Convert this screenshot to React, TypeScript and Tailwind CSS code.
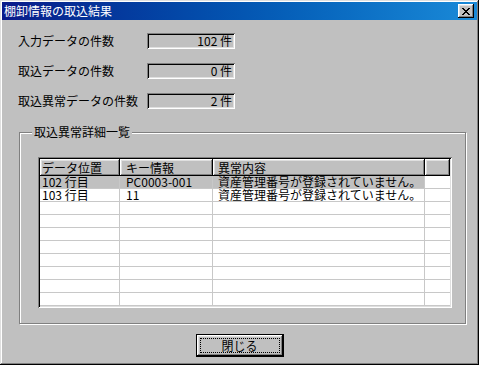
import React from "react";

const font = { fontFamily: '"Noto Sans CJK JP", "Noto Sans", sans-serif' };

const raised =
  "shadow-[inset_-1px_-1px_0_#000,inset_1px_1px_0_#fff,inset_-2px_-2px_0_#808080,inset_2px_2px_0_#dfdfdf]";
const sunken =
  "shadow-[inset_1px_1px_0_#808080,inset_-1px_-1px_0_#fff,inset_2px_2px_0_#000,inset_-2px_-2px_0_#dfdfdf]";

const counts = [
  { label: "入力データの件数", value: "102 件" },
  { label: "取込データの件数", value: "0 件" },
  { label: "取込異常データの件数", value: "2 件" },
];

const columns = [
  { title: "データ位置", w: "w-[80px]", pad: "pl-[2px]" },
  { title: "キー情報", w: "w-[93px]", pad: "pl-[6px]" },
  { title: "異常内容", w: "w-[212px]", pad: "pl-[5px]" },
];

const rows = [
  ["102 行目", "PC0003-001", "資産管理番号が登録されていません。"],
  ["103 行目", "11", "資産管理番号が登録されていません。"],
];

function CloseButton() {
  return (
    <div
      className={`w-[16px] h-[14px] bg-[#c0c0c0] flex items-center justify-center ${raised}`}
    >
      <svg width="8" height="7" viewBox="0 0 8 7" shapeRendering="crispEdges">
        <path
          d="M0 0h2v1h-2zM6 0h2v1h-2zM1 1h2v1h-2zM5 1h2v1h-2zM2 2h4v1h-4zM3 3h2v1h-2zM2 4h4v1h-4zM1 5h2v1h-2zM5 5h2v1h-2zM0 6h2v1h-2zM6 6h2v1h-2z"
          fill="#000"
        />
      </svg>
    </div>
  );
}

export default function App() {
  const blank = Array.from({ length: 10 }, (_, i) => rows[i] ?? ["", "", ""]);

  return (
    <div
      className="w-[479px] h-[365px] bg-[#c0c0c0] p-[2px] text-[12px] text-black shadow-[inset_-1px_-1px_0_#000,inset_1px_1px_0_#dfdfdf,inset_-2px_-2px_0_#808080,inset_2px_2px_0_#fff]"
      style={font}
    >
      {/* title bar */}
      <div className="h-[18px] flex items-center justify-between bg-gradient-to-r from-[#0a1a8a] to-[#1a8ad8] pl-[2px] pr-[3px]">
        <span className="text-white leading-[18px]">棚卸情報の取込結果</span>
        <CloseButton />
      </div>

      <div className="pt-[13px]">
        <div className="flex flex-col gap-[14px] pl-[16px]">
          {counts.map((c) => (
            <div key={c.label} className="flex items-center h-[16px]">
              <span className="w-[129px] leading-[16px]">{c.label}</span>
              <div
                className={`w-[88px] h-[16px] flex items-center justify-end pr-[3px] leading-[12px] ${sunken}`}
              >
                {c.value}
              </div>
            </div>
          ))}
        </div>

        {/* group box */}
        <div className="relative ml-[17px] mt-[23px] w-[447px] h-[192px] border border-[#808080] shadow-[inset_1px_1px_0_#fff,1px_1px_0_#fff]">
          <span className="absolute -top-[9px] left-[12px] px-[2px] bg-[#c0c0c0] leading-[16px]">
            取込異常詳細一覧
          </span>

          <div className={`ml-[18px] mt-[24px] w-[414px] h-[151px] bg-white p-[2px] ${sunken}`}>
            <div className="flex h-[17px]">
              {columns.map((c) => (
                <div
                  key={c.title}
                  className={`${c.w} ${c.pad} h-full bg-[#c0c0c0] flex items-center leading-[12px] ${raised}`}
                >
                  {c.title}
                </div>
              ))}
              <div className={`flex-1 h-full bg-[#c0c0c0] ${raised}`} />
            </div>
            {blank.map((r, i) => (
              <div key={i} className="flex h-[13px]">
                {columns.map((c, j) => (
                  <div
                    key={j}
                    className={`${c.w} ${c.pad} h-full border-r border-b border-[#c8c8c8] leading-[12px] whitespace-nowrap ${
                      i === 0 ? "bg-[#c0c0c0]" : ""
                    }`}
                  >
                    {r[j]}
                  </div>
                ))}
                <div className="flex-1 h-full border-b border-[#c8c8c8]" />
              </div>
            ))}
          </div>
        </div>

        <div className="flex justify-center mt-[10px]">
          <button className="w-[88px] h-[23px] border border-black bg-[#c0c0c0] p-0">
            <div className={`w-full h-full p-[3px] ${raised}`}>
              <div className="w-full h-full border border-dotted border-black flex items-center justify-center leading-[12px]">
                閉じる
              </div>
            </div>
          </button>
        </div>
      </div>
    </div>
  );
}
